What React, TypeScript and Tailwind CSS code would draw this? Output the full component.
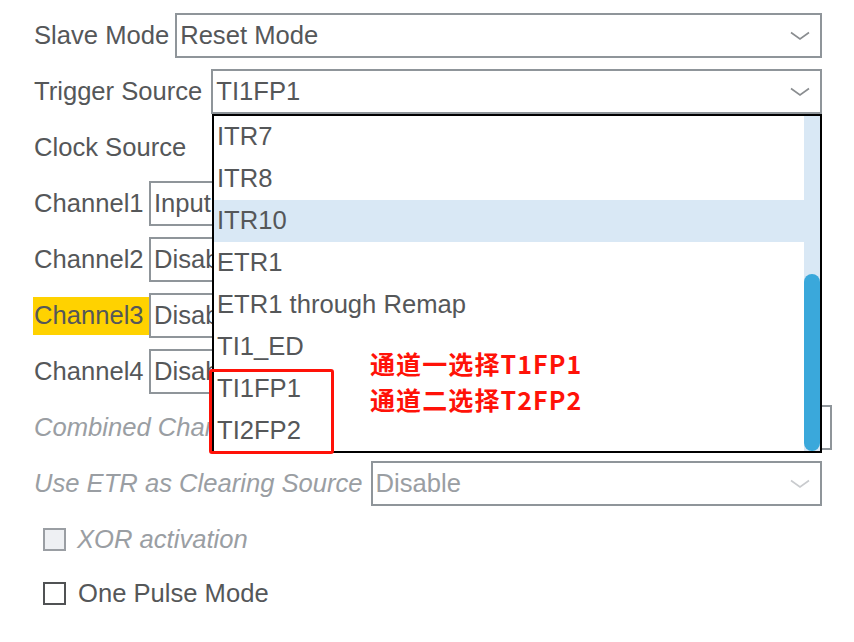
import React from "react";

const options = ["ITR7", "ITR8", "ITR10", "ETR1", "ETR1 through Remap", "TI1_ED", "TI1FP1", "TI2FP2"];

function Chevron({ light }: { light?: boolean }) {
  return (
    <svg width="20" height="10" viewBox="0 0 20 10" className="shrink-0">
      <path
        d="M1 1.5 L10 8 L19 1.5"
        fill="none"
        stroke={light ? "#c9cbce" : "#8a8d90"}
        strokeWidth="1.6"
      />
    </svg>
  );
}

function Select({ value, disabled, className = "" }: { value: string; disabled?: boolean; className?: string }) {
  return (
    <div
      className={`flex h-[45px] flex-1 items-center justify-between border-2 border-[#8f959a] bg-white pl-[3px] pr-[10px] ${className}`}
    >
      <span className={disabled ? "text-[#9a9ea3]" : "text-[#555759]"}>{value}</span>
      <Chevron light={disabled} />
    </div>
  );
}

export default function App() {
  return (
    <main
      className="relative h-[642px] w-[854px] overflow-hidden bg-white text-[25.6px] leading-none text-[#555759]"
      style={{ fontFamily: '"Liberation Sans", Arial, sans-serif' }}
    >
      <div className="flex flex-col gap-[11px] pl-[34px] pt-[13px]">
        <div className="flex items-center gap-[6px] pr-[32px]">
          <span>Slave Mode</span>
          <Select value="Reset Mode" />
        </div>
        <div className="flex items-center gap-[9px] pr-[32px]">
          <span>Trigger Source</span>
          <Select value="TI1FP1" />
        </div>
        <div className="flex h-[45px] items-center">
          <span>Clock Source</span>
        </div>
        {["Channel1", "Channel2", "Channel3", "Channel4"].map((ch, i) => (
          <div key={ch} className="flex items-center pr-[32px]">
            <span
              className={`-ml-px flex h-[38px] w-[116px] items-center pl-px ${ch === "Channel3" ? "bg-[#ffd200]" : ""}`}
            >
              {ch}
            </span>
            <Select value={i === 0 ? "Input Capture direct mode" : "Disable"} />
          </div>
        ))}
        <div className="flex items-center gap-[8px] pr-[22px]">
          <span className="italic text-[#9a9ea3]">Combined Channels</span>
          <Select value="Disable" disabled />
        </div>
        <div className="flex items-center gap-[8px] pr-[32px]">
          <span className="italic text-[#9a9ea3]">Use ETR as Clearing Source</span>
          <Select value="Disable" disabled />
        </div>
        <div className="flex h-[45px] items-center gap-[11px] pl-[9px]">
          <span className="h-[23px] w-[23px] border-2 border-[#9a9ea3] bg-[#eef0f3]" />
          <span className="italic text-[#9a9ea3]">XOR activation</span>
        </div>
        <div className="-mt-[2px] flex h-[45px] items-center gap-[12px] pl-[9px]">
          <span className="h-[23px] w-[23px] border-2 border-[#505254] bg-white" />
          <span>One Pulse Mode</span>
        </div>
      </div>

      {/* open dropdown list */}
      <div className="absolute left-[212px] top-[114px] flex h-[339px] w-[610px] border-2 border-black bg-white">
        <div className="flex flex-1 flex-col">
          {options.map((o) => (
            <div
              key={o}
              className={`flex h-[42px] shrink-0 items-center pl-[3px] ${o === "ITR10" ? "bg-[#d9e8f5]" : ""}`}
            >
              {o}
            </div>
          ))}
        </div>
        <div className="flex w-[16px] flex-col bg-[#d9e8f5] pt-[158px]">
          <div className="flex-1 rounded-full bg-[#3aa8db]" />
        </div>
      </div>

      {/* annotation */}
      <div className="absolute left-[209px] top-[369px] h-[85px] w-[125px] rounded-[3px] border-[3px] border-[#ff1208]" />
      <div
        className="absolute left-[370px] top-[348px] flex flex-col gap-[6px] text-[25px] font-bold leading-[30px] tracking-[1.1px] text-[#ff1208]"
        style={{ fontFamily: '"Noto Sans CJK SC", "Liberation Sans", sans-serif' }}
      >
        <span>通道一选择T1FP1</span>
        <span>通道二选择T2FP2</span>
      </div>
    </main>
  );
}
